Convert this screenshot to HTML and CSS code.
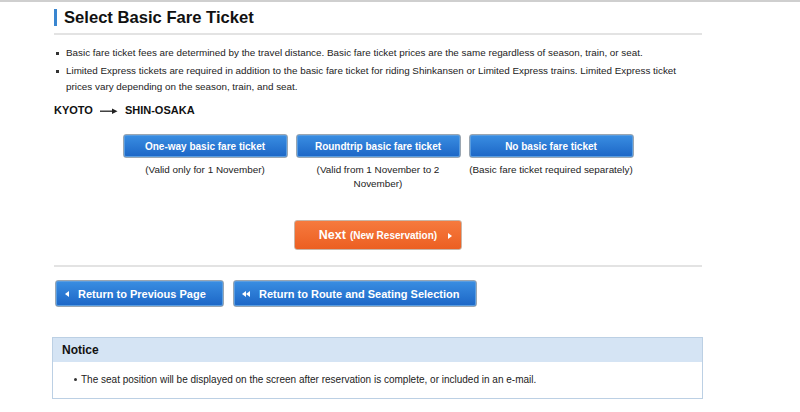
FILE: index.html
```html
<!DOCTYPE html>
<html lang="en">
<head>
<meta charset="utf-8">
<title>Select Basic Fare Ticket</title>
<link rel="stylesheet" href="styles.css">
</head>
<body>
<div class="topline"></div>
<main class="page">
  <h1 class="title">Select Basic Fare Ticket</h1>
  <ul class="notes">
    <li>Basic fare ticket fees are determined by the travel distance. Basic fare ticket prices are the same regardless of season, train, or seat.</li>
    <li>Limited Express tickets are required in addition to the basic fare ticket for riding Shinkansen or Limited Express trains. Limited Express ticket prices vary depending on the season, train, and seat.</li>
  </ul>
  <div class="route">
    <span>KYOTO</span>
    <svg class="route-arrow" width="18" height="8" viewBox="0 0 18 8"><path d="M0 4.2H14" stroke="#222" stroke-width="1.3"/><path d="M12 1.5L17.5 4.2L12 6.9Z" fill="#222"/></svg>
    <span>SHIN-OSAKA</span>
  </div>
  <div class="choices">
    <div class="choice">
      <button class="btn btn-blue btn-choice">One-way basic fare ticket</button>
      <p class="caption">(Valid only for 1 November)</p>
    </div>
    <div class="choice">
      <button class="btn btn-blue btn-choice">Roundtrip basic fare ticket</button>
      <p class="caption">(Valid from 1 November to 2<br>November)</p>
    </div>
    <div class="choice">
      <button class="btn btn-blue btn-choice">No basic fare ticket</button>
      <p class="caption">(Basic fare ticket required separately)</p>
    </div>
  </div>
  <div class="next-row">
    <button class="btn btn-orange">Next <small>(New Reservation)</small><span class="tri-right"></span></button>
  </div>
  <div class="back-row">
    <button class="btn btn-blue btn-back btn-prev"><span class="tri-left"></span>Return to Previous Page</button>
    <button class="btn btn-blue btn-back btn-route"><span class="tri-left tri-first"></span><span class="tri-left"></span>Return to Route and Seating Selection</button>
  </div>
  <section class="notice">
    <h2 class="notice-head">Notice</h2>
    <ul class="notice-body">
      <li>The seat position will be displayed on the screen after reservation is complete, or included in an e-mail.</li>
    </ul>
  </section>
</main>
</body>
</html>
```
FILE: styles.css
```css
html, body {
  margin: 0;
  padding: 0;
  background: #fff;
}
body {
  font-family: "Liberation Sans", Arial, sans-serif;
  color: #222;
}
.topline {
  height: 2px;
  background: #cfcfcf;
}
.page {
  width: 648px;
  margin-left: 54px;
  display: flex;
  flex-direction: column;
}
.title {
  margin: 5px 0 0;
  padding: 0 0 5px 10px;
  font-size: 16.6px;
  line-height: 21px;
  font-weight: bold;
  color: #111;
  border-bottom: 2px solid #e3e3e3;
  position: relative;
}
.title::before {
  content: "";
  position: absolute;
  left: 0;
  top: 2px;
  width: 3px;
  height: 17px;
  background: #3a86d0;
}
.notes {
  list-style: none;
  margin: 10px 0 0;
  padding: 0;
  font-size: 9.85px;
  line-height: 16px;
}
.notes li {
  position: relative;
  padding-left: 12px;
  margin-bottom: 2px;
}
.notes li::before {
  content: "";
  position: absolute;
  left: 2px;
  top: 7px;
  width: 3px;
  height: 3px;
  background: #333;
}
.route {
  margin-top: 5px;
  display: flex;
  align-items: center;
  gap: 7px;
  font-size: 11px;
  font-weight: bold;
  line-height: 16px;
  color: #111;
}
.route-arrow {
  margin-top: 1px;
}
.choices {
  margin-top: 16px;
  display: flex;
  justify-content: center;
  gap: 8px;
}
.choice {
  width: 165px;
  display: flex;
  flex-direction: column;
  align-items: center;
}
.btn {
  font-family: "Liberation Sans", Arial, sans-serif;
  font-weight: bold;
  color: #fff;
  border-radius: 3px;
  cursor: pointer;
  display: flex;
  align-items: center;
  justify-content: center;
  padding: 0;
  white-space: nowrap;
}
.btn-blue {
  background: linear-gradient(#3a8ee2, #1c66c6);
  border: 1px solid #9aa6b2;
  box-shadow: inset 0 0 0 1px #5a9de0;
}
.btn-choice {
  width: 165px;
  height: 24px;
  font-size: 10px;
}
.caption {
  margin: 5px 0 0;
  font-size: 9.9px;
  line-height: 14px;
  text-align: center;
  color: #222;
  white-space: nowrap;
}
.next-row {
  margin-top: 29px;
  padding-bottom: 15px;
  border-bottom: 2px solid #e3e3e3;
  display: flex;
  justify-content: center;
}
.btn-orange {
  width: 168px;
  height: 30px;
  background: linear-gradient(#f67a3e, #ec5f22);
  border: 1px solid #c9b6a8;
  font-size: 12.5px;
  position: relative;
  gap: 4px;
}
.btn-orange small {
  font-size: 10px;
  margin-top: 1px;
}
.tri-right {
  position: absolute;
  right: 9px;
  top: 12px;
  width: 0;
  height: 0;
  border-left: 4px solid #fff;
  border-top: 3px solid transparent;
  border-bottom: 3px solid transparent;
}
.back-row {
  margin-top: 13px;
  margin-left: 1px;
  display: flex;
  gap: 9px;
}
.btn-back {
  height: 27px;
  font-size: 11px;
  justify-content: flex-start;
}
.btn-prev {
  width: 169px;
  padding-left: 9px;
}
.btn-route {
  width: 244px;
  padding-left: 8px;
}
.tri-left {
  width: 0;
  height: 0;
  border-right: 4px solid #fff;
  border-top: 3px solid transparent;
  border-bottom: 3px solid transparent;
  margin-right: 9px;
}
.tri-left.tri-first {
  margin-right: 0;
}
.notice {
  margin: 30px 0 0 -2px;
  width: 649px;
  border: 1px solid #bcd0e4;
}
.notice-head {
  margin: 0;
  height: 24px;
  line-height: 24px;
  padding-left: 9px;
  background: #d5e4f4;
  font-size: 12px;
  font-weight: bold;
  color: #111;
}
.notice-body {
  list-style: none;
  margin: 0;
  padding: 11px 0 12px 28px;
  font-size: 10px;
  line-height: 13px;
}
.notice-body li {
  position: relative;
}
.notice-body li::before {
  content: "";
  position: absolute;
  left: -7px;
  top: 5px;
  width: 3px;
  height: 3px;
  border-radius: 50%;
  background: #333;
}
```
